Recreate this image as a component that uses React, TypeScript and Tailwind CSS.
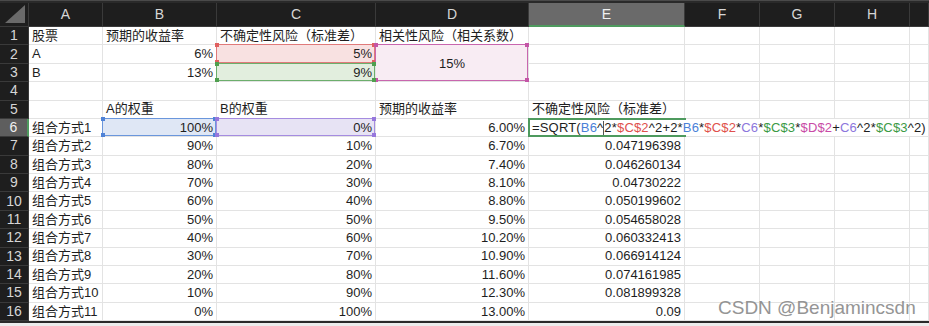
import React from "react";

const FONT = { fontFamily: '"Liberation Sans", "Noto Sans CJK SC", sans-serif' };

const cols = ["A", "B", "C", "D", "E", "F", "G", "H", ""];

function Handles({ color }: { color: string }) {
  const c = "absolute w-[4px] h-[4px]";
  return (
    <>
      <span className={`${c} left-[-2px] top-[-2px] ${color}`} />
      <span className={`${c} right-[-2px] top-[-2px] ${color}`} />
      <span className={`${c} left-[-2px] bottom-[-2px] ${color}`} />
      <span className={`${c} right-[-2px] bottom-[-2px] ${color}`} />
    </>
  );
}

function Cell({
  children,
  align = "left",
  hl,
  noRight,
  className = "",
}: {
  children?: React.ReactNode;
  align?: "left" | "right" | "center";
  hl?: "red" | "green" | "pink" | "blue" | "purple";
  noRight?: boolean;
  className?: string;
}) {
  const hlMap: Record<string, { box: string; dot: string }> = {
    red: { box: "border-[#e07a7a] bg-[#f8e1e1]", dot: "bg-[#e06060]" },
    green: { box: "border-[#6cae6c] bg-[#e2eede]", dot: "bg-[#4f9f4f]" },
    pink: { box: "border-[#c866ae] bg-[#f8ecf3]", dot: "bg-[#c455a6]" },
    blue: { box: "border-[#6a96dc] bg-[#dfe7f5]", dot: "bg-[#4f82d6]" },
    purple: { box: "border-[#a58ce0] bg-[#e7e3f4]", dot: "bg-[#9677dc]" },
  };
  const alignCls =
    align === "right" ? "justify-end pr-[3px]" : align === "center" ? "justify-center" : "justify-start pl-[3px]";
  return (
    <div
      className={`relative flex items-center border-b ${noRight ? "" : "border-r"} border-[#e3e3e3] bg-white text-[13px] text-[#1e1e1e] whitespace-nowrap ${alignCls} ${className}`}
    >
      {hl && (
        <div className={`absolute left-[-1px] top-[-1px] right-0 bottom-0 border ${hlMap[hl].box}`}>
          <Handles color={hlMap[hl].dot} />
        </div>
      )}
      <span className="relative">{children}</span>
    </div>
  );
}

function RowNum({ n, active }: { n: number; active?: boolean }) {
  return (
    <div
      className={`flex items-center justify-center border-b border-[#3a3a3a] text-[14px] ${
        active ? "bg-[#5e5e5e] text-[#f0f0f0] border-r-2 border-r-[#4e9a5e]" : "bg-[#1e1e1e] text-[#d6d6d6] border-r border-r-[#3a3a3a]"
      }`}
    >
      {n}
    </div>
  );
}

const C = {
  blue: "text-[#4a80d8]",
  red: "text-[#e0504c]",
  purple: "text-[#8c76dc]",
  green: "text-[#3b9a45]",
  pink: "text-[#c94aa6]",
};

function Formula() {
  return (
    <span className="tracking-[0.17px]">
      =SQRT(<span className={C.blue}>B6</span>^
      <span className="inline-block w-px h-[14px] bg-[#555] align-middle" />
      2*<span className={C.red}>$C$2</span>^2+2*<span className={C.blue}>B6</span>*
      <span className={C.red}>$C$2</span>*<span className={C.purple}>C6</span>*
      <span className={C.green}>$C$3</span>*<span className={C.pink}>$D$2</span>+
      <span className={C.purple}>C6</span>^2*<span className={C.green}>$C$3</span>^2)
    </span>
  );
}

export default function App() {
  const bw = ["100%", "90%", "80%", "70%", "60%", "50%", "40%", "30%", "20%", "10%", "0%"];
  const cw = ["0%", "10%", "20%", "30%", "40%", "50%", "60%", "70%", "80%", "90%", "100%"];
  const ret = ["6.00%", "6.70%", "7.40%", "8.10%", "8.80%", "9.50%", "10.20%", "10.90%", "11.60%", "12.30%", "13.00%"];
  const sd = [
    "",
    "0.047196398",
    "0.046260134",
    "0.04730222",
    "0.050199602",
    "0.054658028",
    "0.060332413",
    "0.066914124",
    "0.074161985",
    "0.081899328",
    "0.09",
  ];

  const empties = (n: number) =>
    Array.from({ length: n }).map((_, i) => <Cell key={`e${i}`} />);

  return (
    <div className="w-[929px] h-[326px] bg-[#ececec] overflow-hidden relative" style={FONT}>
      <div className="h-[3px] bg-[#2a2a2a] border-t border-[#4a4a4a]" />
      <div className="grid grid-cols-[29px_74px_114px_159px_153px_156px_75px_75px_75px_1fr] grid-rows-[24px_repeat(16,18.375px)] bg-white">
        {/* header */}
        <div className="relative bg-[#1e1e1e] border-r border-b border-[#3a3a3a] overflow-hidden">
          <div className="absolute right-[3px] bottom-[3px] w-0 h-0 border-l-[20px] border-l-transparent border-b-[18px] border-b-[#6a6a6a]" />
        </div>
        {cols.map((c, i) => (
          <div
            key={i}
            className={`flex items-center justify-center text-[14px] border-r border-[#3a3a3a] ${
              c === "E"
                ? "bg-[#6a6a6a] text-[#f0f0f0] border-b-2 border-b-[#4e9a5e]"
                : "bg-[#1e1e1e] text-[#d6d6d6] border-b border-b-[#3a3a3a]"
            }`}
          >
            {c}
          </div>
        ))}

        {/* row 1 */}
        <RowNum n={1} />
        <Cell>股票</Cell>
        <Cell>预期的收益率</Cell>
        <Cell>不确定性风险（标准差）</Cell>
        <Cell>相关性风险（相关系数）</Cell>
        {empties(5)}

        {/* row 2 */}
        <RowNum n={2} />
        <Cell>A</Cell>
        <Cell align="right">6%</Cell>
        <Cell align="right" hl="red">5%</Cell>
        <Cell align="center" hl="pink" className="row-span-2">15%</Cell>
        {empties(5)}

        {/* row 3 */}
        <RowNum n={3} />
        <Cell>B</Cell>
        <Cell align="right">13%</Cell>
        <Cell align="right" hl="green">9%</Cell>
        {empties(5)}

        {/* row 4 */}
        <RowNum n={4} />
        {empties(9)}

        {/* row 5 */}
        <RowNum n={5} />
        <Cell />
        <Cell>A的权重</Cell>
        <Cell>B的权重</Cell>
        <Cell>预期的收益率</Cell>
        <Cell>不确定性风险（标准差）</Cell>
        {empties(4)}

        {bw.map((b, i) => {
          const r = i + 6;
          return (
            <React.Fragment key={r}>
              <RowNum n={r} active={r === 6} />
              <Cell>组合方式{i + 1}</Cell>
              <Cell align="right" hl={r === 6 ? "blue" : undefined}>{b}</Cell>
              <Cell align="right" hl={r === 6 ? "purple" : undefined}>{cw[i]}</Cell>
              <Cell align="right">{ret[i]}</Cell>
              {r === 6 ? (
                <div className="relative z-10 flex items-center border-b border-[#e3e3e3] bg-white text-[13px] text-[#1e1e1e] whitespace-nowrap overflow-visible">
                  <div className="absolute left-[-1px] top-[-1px] right-[-1px] bottom-[-1px] border-2 border-r-0 border-[#4e9a5e]" />
                  <span className="relative pl-[3px]">
                    <Formula />
                  </span>
                </div>
              ) : (
                <Cell align="right">{sd[i]}</Cell>
              )}
              {r === 6 ? (
                <>
                  <Cell noRight />
                  <Cell noRight />
                  <Cell noRight />
                  <Cell />
                </>
              ) : (
                empties(4)
              )}
            </React.Fragment>
          );
        })}
      </div>
      <div className="h-[2px] bg-[#2a2a2a]" />
      <div className="absolute left-[718px] top-[294px] text-[19px] text-[#8a8a8a] opacity-90 whitespace-nowrap">
        CSDN @Benjamincsdn
      </div>
    </div>
  );
}
